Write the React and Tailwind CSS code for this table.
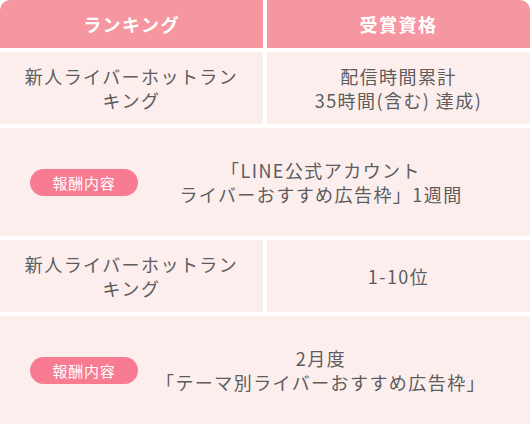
/* ----------------------------------------------------------------------------------------------
App.jsx
Ranking rewards table
------------------------------------------------------------------------------------------------- */

const FONT = "font-['Noto_Sans_CJK_JP','Noto_Sans',sans-serif]";

function Badge() {
  return (
    <span className="flex items-center justify-center w-[108px] h-[27px] shrink-0 rounded-full bg-[#f87c91] text-white text-[15px] leading-none tracking-[0.05em]">
      報酬内容
    </span>
  );
}

function Cell({ children }) {
  return (
    <div className="flex items-center justify-center h-[72px] px-[18px] bg-[#fdeeee] text-center">
      {children}
    </div>
  );
}

function Reward({ children }) {
  return (
    <div className="col-span-2 flex items-center h-[108px] pl-[30px] bg-[#fdeeee]">
      <Badge />
      <p className="flex-1 mr-[26px] text-center">{children}</p>
    </div>
  );
}

function App() {
  return (
    <div className={`w-[530px] h-[424px] bg-white ${FONT}`}>
      <div className="grid grid-cols-2 gap-[4px] text-[18px] leading-[24px] tracking-[0.08em] text-[#5c5c5c]">
        {/* header */}
        <div className="flex items-center justify-center h-[48px] rounded-tl-[10px] bg-[#f596a1] text-white font-bold">
          ランキング
        </div>
        <div className="flex items-center justify-center h-[48px] rounded-tr-[10px] bg-[#f596a1] text-white font-bold">
          受賞資格
        </div>

        <Cell>新人ライバーホットランキング</Cell>
        <Cell>
          配信時間累計
          <br />
          35時間(含む) 達成)
        </Cell>
        <Reward>
          「LINE公式アカウント
          <br />
          ライバーおすすめ広告枠」1週間
        </Reward>

        <Cell>新人ライバーホットランキング</Cell>
        <Cell>1-10位</Cell>
        <Reward>
          2月度
          <br />
          「テーマ別ライバーおすすめ広告枠」
        </Reward>
      </div>
    </div>
  );
}

export default App;
